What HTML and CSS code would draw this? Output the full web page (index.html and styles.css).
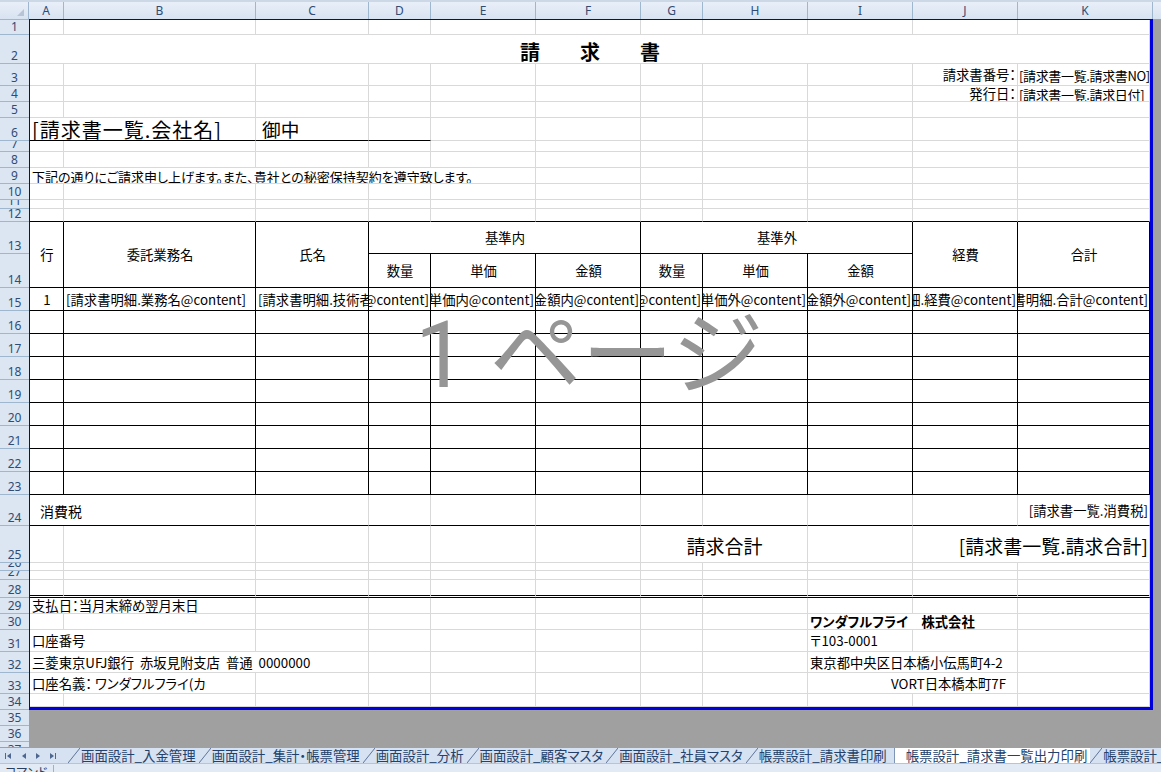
FILE: index.html
```html
<!DOCTYPE html>
<html lang="ja">
<head>
<meta charset="utf-8">
<title>請求書</title>
<link rel="stylesheet" href="styles.css">
</head>
<body>
<div class="app">
  <div class="topstrip"></div>
  <div class="colhead">
    <div class="corner"><span class="tri"></span></div>
    <div class="ch wa">A</div>
    <div class="ch wb">B</div>
    <div class="ch wc">C</div>
    <div class="ch wd">D</div>
    <div class="ch we">E</div>
    <div class="ch we">F</div>
    <div class="ch wd">G</div>
    <div class="ch we">H</div>
    <div class="ch we">I</div>
    <div class="ch we">J</div>
    <div class="ch wk">K</div>
    <div class="ch rest"></div>
  </div>
  <div class="main">
    <div class="rowhead">
      <div class="rh">1</div><div class="rh">2</div><div class="rh">3</div><div class="rh">4</div><div class="rh">5</div><div class="rh">6</div><div class="rh">7</div><div class="rh">8</div><div class="rh">9</div><div class="rh">10</div><div class="rh">11</div><div class="rh">12</div><div class="rh">13</div><div class="rh">14</div><div class="rh">15</div><div class="rh">16</div><div class="rh">17</div><div class="rh">18</div><div class="rh">19</div><div class="rh">20</div><div class="rh">21</div><div class="rh">22</div><div class="rh">23</div><div class="rh">24</div><div class="rh">25</div><div class="rh">26</div><div class="rh">27</div><div class="rh">28</div><div class="rh">29</div><div class="rh">30</div><div class="rh">31</div><div class="rh">32</div><div class="rh">33</div><div class="rh">34</div><div class="rh">35</div><div class="rh">36</div><div class="rh">37</div>
    </div>
    <div class="canvas">
      <div class="sheet">
        <!-- 1 -->
        <div class="c"></div><div class="c"></div><div class="c"></div><div class="c"></div><div class="c"></div><div class="c"></div><div class="c"></div><div class="c"></div><div class="c"></div><div class="c"></div><div class="c"></div>
        <!-- 2 -->
        <div class="c s11 title">請　　求　　書</div>
        <!-- 3 -->
        <div class="c"></div><div class="c"></div><div class="c"></div><div class="c"></div><div class="c"></div><div class="c"></div><div class="c"></div><div class="c"></div><div class="c"></div><div class="c r">請求書番号：</div><div class="c kc">[請求書一覧.請求書NO]</div>
        <!-- 4 -->
        <div class="c"></div><div class="c"></div><div class="c"></div><div class="c"></div><div class="c"></div><div class="c"></div><div class="c"></div><div class="c"></div><div class="c"></div><div class="c r">発行日：</div><div class="c kc">[請求書一覧.請求日付]</div>
        <!-- 5 -->
        <div class="c"></div><div class="c"></div><div class="c"></div><div class="c"></div><div class="c"></div><div class="c"></div><div class="c"></div><div class="c"></div><div class="c"></div><div class="c"></div><div class="c"></div>
        <!-- 6 -->
        <div class="c s2 big bb wide">[請求書一覧.会社名]</div><div class="c big bb onchu">御中</div><div class="c bb"></div><div class="c"></div><div class="c"></div><div class="c"></div><div class="c"></div><div class="c"></div><div class="c"></div><div class="c"></div>
        <!-- 7 -->
        <div class="c"></div><div class="c"></div><div class="c"></div><div class="c"></div><div class="c"></div><div class="c"></div><div class="c"></div><div class="c"></div><div class="c"></div><div class="c"></div><div class="c"></div>
        <!-- 8 -->
        <div class="c"></div><div class="c"></div><div class="c"></div><div class="c"></div><div class="c"></div><div class="c"></div><div class="c"></div><div class="c"></div><div class="c"></div><div class="c"></div><div class="c"></div>
        <!-- 9 -->
        <div class="c s5 note">下記の通りにご請求申し上げます。また、貴社との秘密保持契約を遵守致します。</div><div class="c"></div><div class="c"></div><div class="c"></div><div class="c"></div><div class="c"></div><div class="c"></div>
        <!-- 10 -->
        <div class="c"></div><div class="c"></div><div class="c"></div><div class="c"></div><div class="c"></div><div class="c"></div><div class="c"></div><div class="c"></div><div class="c"></div><div class="c"></div><div class="c"></div>
        <!-- 11 -->
        <div class="c"></div><div class="c"></div><div class="c"></div><div class="c"></div><div class="c"></div><div class="c"></div><div class="c"></div><div class="c"></div><div class="c"></div><div class="c"></div><div class="c"></div>
        <!-- 12 -->
        <div class="c bb"></div><div class="c bb"></div><div class="c bb"></div><div class="c bb"></div><div class="c bb"></div><div class="c bb"></div><div class="c bb"></div><div class="c bb"></div><div class="c bb"></div><div class="c bb"></div><div class="c bb"></div>
        <!-- 13 -->
        <div class="c t m rs2">行</div><div class="c t m rs2">委託業務名</div><div class="c t m rs2">氏名</div><div class="c t m s3">基準内</div><div class="c t m s3">基準外</div><div class="c t m rs2">経費</div><div class="c t m rs2">合計</div>
        <!-- 14 -->
        <div class="c t m">数量</div><div class="c t m">単価</div><div class="c t m">金額</div><div class="c t m">数量</div><div class="c t m">単価</div><div class="c t m">金額</div>
        <!-- 15 -->
        <div class="c t m dt">1</div><div class="c t dt">[請求書明細.業務名@content]</div><div class="c t dt">[請求書明細.技術者@content]</div><div class="c t r dt">[請求書明細.数量内@content]</div><div class="c t r dt">[請求書明細.単価内@content]</div><div class="c t r dt">[請求書明細.金額内@content]</div><div class="c t r dt">[請求書明細.数量外@content]</div><div class="c t r dt">[請求書明細.単価外@content]</div><div class="c t r dt">[請求書明細.金額外@content]</div><div class="c t r dt">[請求書明細.経費@content]</div><div class="c t r dt">[請求書明細.合計@content]</div>
        <!-- 16 -->
        <div class="c t"></div><div class="c t"></div><div class="c t"></div><div class="c t"></div><div class="c t"></div><div class="c t"></div><div class="c t"></div><div class="c t"></div><div class="c t"></div><div class="c t"></div><div class="c t"></div>
        <!-- 17 -->
        <div class="c t"></div><div class="c t"></div><div class="c t"></div><div class="c t"></div><div class="c t"></div><div class="c t"></div><div class="c t"></div><div class="c t"></div><div class="c t"></div><div class="c t"></div><div class="c t"></div>
        <!-- 18 -->
        <div class="c t"></div><div class="c t"></div><div class="c t"></div><div class="c t"></div><div class="c t"></div><div class="c t"></div><div class="c t"></div><div class="c t"></div><div class="c t"></div><div class="c t"></div><div class="c t"></div>
        <!-- 19 -->
        <div class="c t"></div><div class="c t"></div><div class="c t"></div><div class="c t"></div><div class="c t"></div><div class="c t"></div><div class="c t"></div><div class="c t"></div><div class="c t"></div><div class="c t"></div><div class="c t"></div>
        <!-- 20 -->
        <div class="c t"></div><div class="c t"></div><div class="c t"></div><div class="c t"></div><div class="c t"></div><div class="c t"></div><div class="c t"></div><div class="c t"></div><div class="c t"></div><div class="c t"></div><div class="c t"></div>
        <!-- 21 -->
        <div class="c t"></div><div class="c t"></div><div class="c t"></div><div class="c t"></div><div class="c t"></div><div class="c t"></div><div class="c t"></div><div class="c t"></div><div class="c t"></div><div class="c t"></div><div class="c t"></div>
        <!-- 22 -->
        <div class="c t"></div><div class="c t"></div><div class="c t"></div><div class="c t"></div><div class="c t"></div><div class="c t"></div><div class="c t"></div><div class="c t"></div><div class="c t"></div><div class="c t"></div><div class="c t"></div>
        <!-- 23 -->
        <div class="c t"></div><div class="c t"></div><div class="c t"></div><div class="c t"></div><div class="c t"></div><div class="c t"></div><div class="c t"></div><div class="c t"></div><div class="c t"></div><div class="c t"></div><div class="c t"></div>
        <!-- 24 -->
        <div class="c s2 bb ind">消費税</div><div class="c bb"></div><div class="c bb"></div><div class="c bb"></div><div class="c bb"></div><div class="c bb"></div><div class="c bb"></div><div class="c bb"></div><div class="c bb"></div><div class="c bb r">[請求書一覧.消費税]</div>
        <!-- 25 -->
        <div class="c"></div><div class="c"></div><div class="c"></div><div class="c"></div><div class="c"></div><div class="c"></div><div class="c s2 m xl">請求合計</div><div class="c"></div><div class="c s2 r xl">[請求書一覧.請求合計]</div>
        <!-- 26 -->
        <div class="c"></div><div class="c"></div><div class="c"></div><div class="c"></div><div class="c"></div><div class="c"></div><div class="c"></div><div class="c"></div><div class="c"></div><div class="c"></div><div class="c"></div>
        <!-- 27 -->
        <div class="c"></div><div class="c"></div><div class="c"></div><div class="c"></div><div class="c"></div><div class="c"></div><div class="c"></div><div class="c"></div><div class="c"></div><div class="c"></div><div class="c"></div>
        <!-- 28 -->
        <div class="c bd"></div><div class="c bd"></div><div class="c bd"></div><div class="c bd"></div><div class="c bd"></div><div class="c bd"></div><div class="c bd"></div><div class="c bd"></div><div class="c bd"></div><div class="c bd"></div><div class="c bd"></div>
        <!-- 29 -->
        <div class="c s2">支払日：当月末締め翌月末日</div><div class="c"></div><div class="c"></div><div class="c"></div><div class="c"></div><div class="c"></div><div class="c"></div><div class="c"></div><div class="c"></div><div class="c"></div>
        <!-- 30 -->
        <div class="c"></div><div class="c"></div><div class="c"></div><div class="c"></div><div class="c"></div><div class="c"></div><div class="c"></div><div class="c"></div><div class="c s2 b">ワンダフルフライ　株式会社</div><div class="c"></div>
        <!-- 31 -->
        <div class="c s2">口座番号</div><div class="c"></div><div class="c"></div><div class="c"></div><div class="c"></div><div class="c"></div><div class="c"></div><div class="c">〒103-0001</div><div class="c"></div><div class="c"></div>
        <!-- 32 -->
        <div class="c s3">三菱東京UFJ銀行  赤坂見附支店  普通  0000000</div><div class="c"></div><div class="c"></div><div class="c"></div><div class="c"></div><div class="c"></div><div class="c s2">東京都中央区日本橋小伝馬町4-2</div><div class="c"></div>
        <!-- 33 -->
        <div class="c s2">口座名義： ワンダフルフライ(カ</div><div class="c"></div><div class="c"></div><div class="c"></div><div class="c"></div><div class="c"></div><div class="c"></div><div class="c s2 vort">VORT日本橋本町7F</div><div class="c"></div>
        <!-- 34 -->
        <div class="c"></div><div class="c"></div><div class="c"></div><div class="c"></div><div class="c"></div><div class="c"></div><div class="c"></div><div class="c"></div><div class="c"></div><div class="c"></div><div class="c"></div>

        <div class="wm"><span class="wm-num">1 </span>ページ</div>
      </div>
    </div>
  </div>
  <div class="tabs">
    <div class="nav">
      <svg width="68" height="15" viewBox="0 0 68 15">
        <g fill="#4d6790">
          <rect x="5" y="5" width="1" height="6"/>
          <path d="M11 5 L7 8 L11 11 Z"/>
          <path d="M26 5 L22 8 L26 11 Z"/>
          <path d="M36 5 L40 8 L36 11 Z"/>
          <path d="M50 5 L54 8 L50 11 Z"/>
          <rect x="55" y="5" width="1" height="6"/>
        </g>
      </svg>
    </div>
    <div class="tab">画面設計_入金管理</div>
    <div class="tab">画面設計_集計・帳票管理</div>
    <div class="tab">画面設計_分析</div>
    <div class="tab">画面設計_顧客マスタ</div>
    <div class="tab">画面設計_社員マスタ</div>
    <div class="tab">帳票設計_請求書印刷</div>
    <div class="tab active">帳票設計_請求書一覧出力印刷</div>
    <div class="tab">帳票設計_</div>
  </div>
  <div class="status"><span class="cmd">コマンド</span></div>
</div>
</body>
</html>
```
FILE: styles.css
```css
* { box-sizing: border-box; }
html, body { margin: 0; padding: 0; }
body {
  width: 1161px;
  height: 772px;
  overflow: hidden;
  background: #ffffff;
  font-family: "Noto Sans CJK JP", "Noto Sans", sans-serif;
  font-feature-settings: "palt";
  color: #000;
}
.app { display: flex; flex-direction: column; width: 1161px; height: 772px; }

.topstrip { flex: none; height: 2px; background: #cdd8e6; }

.colhead {
  flex: none;
  display: flex;
  height: 17px;
  background: linear-gradient(#e9eff8, #d8e3f1);
}
.corner { flex: none; width: 29px; position: relative; border-right: 1px solid #9eb6ce; }
.tri {
  position: absolute; right: 4px; bottom: 3px;
  width: 0; height: 0;
  border-left: 7px solid transparent;
  border-bottom: 7px solid #b7c4d6;
}
.ch {
  flex: none;
  border-right: 1px solid #9eb6ce;
  display: flex; align-items: center; justify-content: center;
  font-family: "Noto Sans", sans-serif;
  font-size: 12px; line-height: 1; color: #2f4c74;
  padding-top: 1px;
}
.wa { width: 35px; }
.wb { width: 192px; }
.wc { width: 113px; }
.wd { width: 62px; }
.we { width: 105px; }
.wk { width: 135px; }
.ch.rest { flex: 1; border-right: none; }

.main { flex: none; height: 728px; display: flex; overflow: hidden; }

.rowhead {
  flex: none;
  width: 29px;
  display: grid;
  grid-template-rows: 15px 29px 22px 16px 16px 23px 11px 16px 16px 16px 9px 13px 32px 34px 23px 23px 23px 23px 23px 23px 23px 23px 23px 31px 37px 8px 9px 18px 16px 16px 22px 21px 21px 16px 16px 16px 16px;
  border-top: 1px solid #9eb6ce;
  background: #dce6f3;
  overflow: hidden;
  align-content: start;
}
.rh {
  border-bottom: 1px solid #9eb6ce;
  display: flex; align-items: flex-end; justify-content: center;
  font-family: "Noto Sans", sans-serif;
  font-size: 12px; line-height: 11px; color: #2f4c74;
  padding-bottom: 2px;
  overflow: hidden;
}

.canvas { flex: 1; background: #a0a0a0; overflow: hidden; }

.sheet {
  position: relative;
  width: 1124px;
  background: #ffffff;
  border-style: solid;
  border-color: #0000dc;
  border-width: 1px 3px 3px 1px;
  display: grid;
  grid-template-columns: 34px 192px 113px 62px 105px 105px 62px 105px 105px 105px 132px;
  grid-template-rows: 15px 29px 22px 16px 16px 23px 11px 16px 16px 16px 9px 13px 32px 34px 23px 23px 23px 23px 23px 23px 23px 23px 23px 31px 37px 8px 9px 18px 16px 16px 22px 21px 21px 13px;
}

.c {
  min-width: 0;
  border-right: 1px solid #d9d9d9;
  border-bottom: 1px solid #d9d9d9;
  overflow: hidden;
  white-space: pre;
  display: flex;
  align-items: center;
  font-size: 13.33px;
  line-height: 1;
  padding: 1px 1px 0 2px;
}
.r { justify-content: flex-end; }
.m { justify-content: center; }
.s2 { grid-column: span 2; }
.s3 { grid-column: span 3; }
.s5 { grid-column: span 5; }
.s11 { grid-column: span 11; }
.rs2 { grid-row: span 2; }

.t { border-right-color: #000; border-bottom-color: #000; }
.bb { border-bottom-color: #000; }
.bd { border-bottom: 3px double #000; }

.title {
  justify-content: center;
  align-items: flex-end;
  font-size: 20px;
  font-weight: bold;
  font-feature-settings: normal;
  padding-bottom: 1px;
}
.kc { padding-left: 1px; padding-right: 0; font-size: 13px; letter-spacing: -0.35px; }
.big { font-size: 18.67px; }
.wide { font-size: 20px; letter-spacing: 1px; }
.onchu { padding-left: 6px; }
.note { font-size: 13px; }
.dt { font-size: 13.33px; padding-top: 2px; }
.ind { padding-left: 10px; font-size: 14px; }
.xl { font-size: 19px; padding-top: 2px; }
.b { font-weight: bold; }
.vort { padding-left: 83px; }

.wm {
  position: absolute;
  left: 385px;
  top: 281px;
  font-size: 92px;
  line-height: 1;
  color: #969696;
  white-space: pre;
  font-feature-settings: normal;
  pointer-events: none;
}
.wm-num { font-family: Roboto, "Noto Sans", sans-serif; font-weight: 400; }

.tabs {
  flex: none;
  height: 16px;
  display: flex;
  background: #d6e2f2;
  border-top: 1px solid #8ea3c2;
  overflow: hidden;
  font-size: 13.4px;
  line-height: 15px;
  color: #23416b;
  white-space: nowrap;
}
.nav { flex: none; width: 68px; height: 15px; }
.nav svg { display: block; }
.tab {
  flex: none;
  position: relative;
  padding: 0 3px 0 13px;
}
.tab::before {
  content: "";
  position: absolute;
  left: 0; top: 0;
  width: 12px; height: 15px;
  background: linear-gradient(to bottom right, transparent calc(50% - 0.8px), #5f7599 50%, transparent calc(50% + 0.8px));
}
.tab.active {
  background: #ffffff;
  padding-left: 11px;
  margin-left: 4px;
  border-left: 1px solid #7f95b5;
}
.tab.active::before { display: none; }

.status {
  flex: 1;
  background: #e2eaf5;
  border-top: 1px solid #b3c4db;
  overflow: hidden;
  font-size: 12px;
  line-height: 14px;
  color: #2a3f5e;
  padding: 1px 0 0 5px;
}
.cmd { display: inline-block; padding-right: 6px; border-right: 1px solid #9eb1cc; }
```
